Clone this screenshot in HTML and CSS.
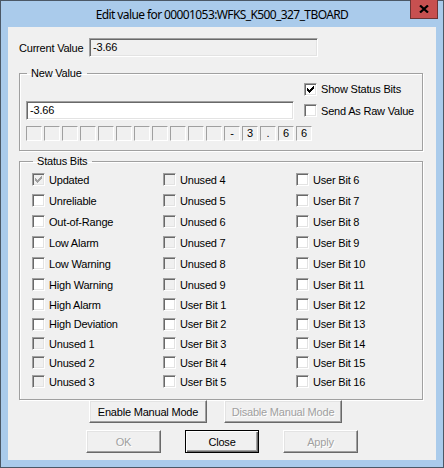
FILE: index.html
```html
<!DOCTYPE html>
<html>
<head>
<meta charset="utf-8">
<title>Edit value</title>
<link rel="stylesheet" href="styles.css">
</head>
<body>
<div class="window">
  <div class="titlebar">
    <span class="title">Edit value for 00001053:WFKS_K500_327_TBOARD</span>
    <span class="close-btn"><svg width="10" height="8" viewBox="0 0 10 8"><path d="M1 0.5 L9 7.5 M9 0.5 L1 7.5" stroke="#000" stroke-width="2.2" fill="none"/></svg></span>
  </div>
  <div class="client">
    <div class="current-row">
      <span class="current-label">Current Value</span>
      <div class="field field-readonly">-3.66</div>
    </div>

    <fieldset class="group group-new">
      <legend>New Value</legend>
      <div class="nv-grid">
        <label class="check nv-show"><span class="cb cb-on"><svg width="7" height="7" viewBox="0 0 7 7"><path d="M6 0h1v1h-1z M5 1h2v1h-2z M0 2h1v1h-1z M4 2h3v1h-3z M0 3h2v1h-2z M3 3h3v1h-3z M0 4h5v1h-5z M1 5h3v1h-3z M2 6h1v1h-1z" fill="#000"/></svg></span><span>Show Status Bits</span></label>
        <div class="field field-edit nv-input">-3.66</div>
        <label class="check nv-raw"><span class="cb"></span><span>Send As Raw Value</span></label>
        <div class="bits">
          <span class="bit"></span><span class="bit"></span><span class="bit"></span><span class="bit"></span>
          <span class="bit"></span><span class="bit"></span><span class="bit"></span><span class="bit"></span>
          <span class="bit"></span><span class="bit"></span><span class="bit"></span><span class="bit">-</span>
          <span class="bit">3</span><span class="bit">.</span><span class="bit">6</span><span class="bit">6</span>
        </div>
      </div>
    </fieldset>

    <fieldset class="group group-status">
      <legend>Status Bits</legend>
      <div class="status-grid">
        <label class="check"><span class="cb cb-off cb-on"><svg width="7" height="7" viewBox="0 0 7 7"><path d="M6 0h1v1h-1z M5 1h2v1h-2z M0 2h1v1h-1z M4 2h3v1h-3z M0 3h2v1h-2z M3 3h3v1h-3z M0 4h5v1h-5z M1 5h3v1h-3z M2 6h1v1h-1z" fill="#a0a0a0"/></svg></span><span>Updated</span></label>
        <label class="check"><span class="cb"></span><span>Unreliable</span></label>
        <label class="check"><span class="cb"></span><span>Out-of-Range</span></label>
        <label class="check"><span class="cb"></span><span>Low Alarm</span></label>
        <label class="check"><span class="cb"></span><span>Low Warning</span></label>
        <label class="check"><span class="cb"></span><span>High Warning</span></label>
        <label class="check"><span class="cb"></span><span>High Alarm</span></label>
        <label class="check"><span class="cb"></span><span>High Deviation</span></label>
        <label class="check"><span class="cb cb-off"></span><span>Unused 1</span></label>
        <label class="check"><span class="cb cb-off"></span><span>Unused 2</span></label>
        <label class="check"><span class="cb cb-off"></span><span>Unused 3</span></label>

        <label class="check"><span class="cb cb-off"></span><span>Unused 4</span></label>
        <label class="check"><span class="cb cb-off"></span><span>Unused 5</span></label>
        <label class="check"><span class="cb cb-off"></span><span>Unused 6</span></label>
        <label class="check"><span class="cb cb-off"></span><span>Unused 7</span></label>
        <label class="check"><span class="cb cb-off"></span><span>Unused 8</span></label>
        <label class="check"><span class="cb cb-off"></span><span>Unused 9</span></label>
        <label class="check"><span class="cb"></span><span>User Bit 1</span></label>
        <label class="check"><span class="cb"></span><span>User Bit 2</span></label>
        <label class="check"><span class="cb"></span><span>User Bit 3</span></label>
        <label class="check"><span class="cb"></span><span>User Bit 4</span></label>
        <label class="check"><span class="cb"></span><span>User Bit 5</span></label>

        <label class="check"><span class="cb"></span><span>User Bit 6</span></label>
        <label class="check"><span class="cb"></span><span>User Bit 7</span></label>
        <label class="check"><span class="cb"></span><span>User Bit 8</span></label>
        <label class="check"><span class="cb"></span><span>User Bit 9</span></label>
        <label class="check"><span class="cb"></span><span>User Bit 10</span></label>
        <label class="check"><span class="cb"></span><span>User Bit 11</span></label>
        <label class="check"><span class="cb"></span><span>User Bit 12</span></label>
        <label class="check"><span class="cb"></span><span>User Bit 13</span></label>
        <label class="check"><span class="cb"></span><span>User Bit 14</span></label>
        <label class="check"><span class="cb"></span><span>User Bit 15</span></label>
        <label class="check"><span class="cb"></span><span>User Bit 16</span></label>
      </div>
    </fieldset>

    <div class="btn-row btn-row-mode">
      <button class="btn btn-wide">Enable Manual Mode</button>
      <button class="btn btn-wide btn-disabled">Disable Manual Mode</button>
    </div>
    <div class="btn-row btn-row-main">
      <button class="btn btn-ok btn-disabled">OK</button>
      <button class="btn btn-close btn-default">Close</button>
      <button class="btn btn-apply btn-disabled">Apply</button>
    </div>
  </div>
</div>
</body>
</html>
```

FILE: styles.css
```css
* {
  box-sizing: border-box;
}

html, body {
  margin: 0;
  padding: 0;
}

body {
  width: 444px;
  height: 468px;
  overflow: hidden;
  background: #ffffff;
}

.window {
  width: 444px;
  height: 468px;
  border: 1px solid #4b5866;
  background: #aacbeb;
  padding: 0 7px 7px 7px;
  display: flex;
  flex-direction: column;
  position: relative;
}

.titlebar {
  height: 26px;
  flex: none;
  display: flex;
  align-items: center;
  justify-content: center;
  font-family: "Noto Sans", "Open Sans", sans-serif;
  font-size: 12px;
  letter-spacing: -0.6px;
  color: #000;
  padding-top: 1px;
}

.close-btn {
  position: absolute;
  top: -1px;
  right: 5px;
  width: 28px;
  height: 19px;
  background: #c75050;
  border: 1px solid #6d3434;
  border-top: none;
  display: flex;
  align-items: center;
  justify-content: center;
}

.client {
  flex: 1;
  background: #f0f0f0;
  font-family: "Liberation Sans", Arial, sans-serif;
  font-size: 11px;
  letter-spacing: -0.2px;
  color: #000;
  padding-top: 11px;
  display: flex;
  flex-direction: column;
}

.client > * {
  flex: none;
}

.current-row {
  display: flex;
  align-items: center;
  padding-left: 11px;
  height: 19px;
}

.current-label {
  width: 70px;
}

.field {
  height: 19px;
  border: 1px solid;
  border-color: #a0a0a0 #ffffff #ffffff #a0a0a0;
  box-shadow: inset 1px 1px 0 #696969, inset -1px -1px 0 #e3e3e3;
  padding: 0 3px;
  display: flex;
  align-items: center;
  line-height: 13px;
}

.field-readonly {
  width: 229px;
  background: #f0f0f0;
}

.field-edit {
  background: #ffffff;
}

.group {
  margin: 0 13px 0 11px;
  border: 1px solid #a0a0a0;
  box-shadow: inset 1px 1px 0 #ffffff, 1px 1px 0 #ffffff;
  min-width: 0;
}

.group legend {
  font-size: 11px;
  line-height: 13px;
  padding: 0 5px 0 4px;
  margin-left: 1px;
}

.group-new {
  margin-top: 10px;
  padding: 0 0 9px 6px;
}

.nv-grid {
  display: grid;
  grid-template-columns: 268px auto;
  grid-template-rows: 18px 19px 18px;
  column-gap: 10px;
  row-gap: 3px;
}

.nv-show {
  grid-column: 2;
  grid-row: 1;
}

.nv-input {
  grid-column: 1;
  grid-row: 2;
}

.nv-raw {
  grid-column: 2;
  grid-row: 2;
}

.bits {
  grid-column: 1 / 3;
  grid-row: 3;
  align-self: end;
  display: flex;
  gap: 2px;
}

.bit {
  width: 16px;
  height: 15px;
  border: 1px solid;
  border-color: #a0a0a0 #ffffff #ffffff #a0a0a0;
  background: #f0f0f0;
  display: flex;
  align-items: center;
  justify-content: center;
  line-height: 13px;
}

.check {
  display: flex;
  align-items: center;
  gap: 4px;
  white-space: nowrap;
}

.cb {
  width: 13px;
  height: 13px;
  flex: none;
  border: 1px solid;
  border-color: #a0a0a0 #ffffff #ffffff #a0a0a0;
  box-shadow: inset 1px 1px 0 #696969, inset -1px -1px 0 #e3e3e3;
  background: #ffffff;
  display: flex;
  align-items: center;
  justify-content: center;
}

.cb-off {
  background: #f0f0f0;
}

.group-status {
  margin-top: 4px;
  padding: 1px 0 8px 12px;
}

.status-grid {
  display: grid;
  grid-auto-flow: column;
  grid-template-columns: 131px 133px auto;
  grid-template-rows: 21px 21px 21px 21px 21px 21px 19px 20px 19px 19px 19px;
}

.btn-row {
  display: flex;
}

.btn-row-mode {
  padding-left: 81px;
  gap: 17px;
}

.btn-row-main {
  margin-top: 7px;
  padding-left: 78px;
  gap: 24px;
}

.btn {
  height: 23px;
  margin: 0;
  padding: 0;
  background: #f0f0f0;
  border: 1px solid;
  border-color: #ffffff #696969 #696969 #ffffff;
  box-shadow: inset -1px -1px 0 #a0a0a0, inset 1px 1px 0 #e3e3e3;
  font-family: "Liberation Sans", Arial, sans-serif;
  font-size: 11px;
  letter-spacing: -0.2px;
  color: #000;
  display: flex;
  align-items: center;
  justify-content: center;
}

.btn-wide {
  width: 118px;
}

.btn-ok,
.btn-apply {
  width: 75px;
}

.btn-close {
  width: 74px;
}

.btn-default {
  border: 1px solid #000000;
  box-shadow: inset 1px 1px 0 #ffffff, inset -1px -1px 0 #696969, inset -2px -2px 0 #a0a0a0;
}

.btn-disabled {
  color: #a0a0a0;
  text-shadow: 1px 1px 0 #ffffff;
}
```
